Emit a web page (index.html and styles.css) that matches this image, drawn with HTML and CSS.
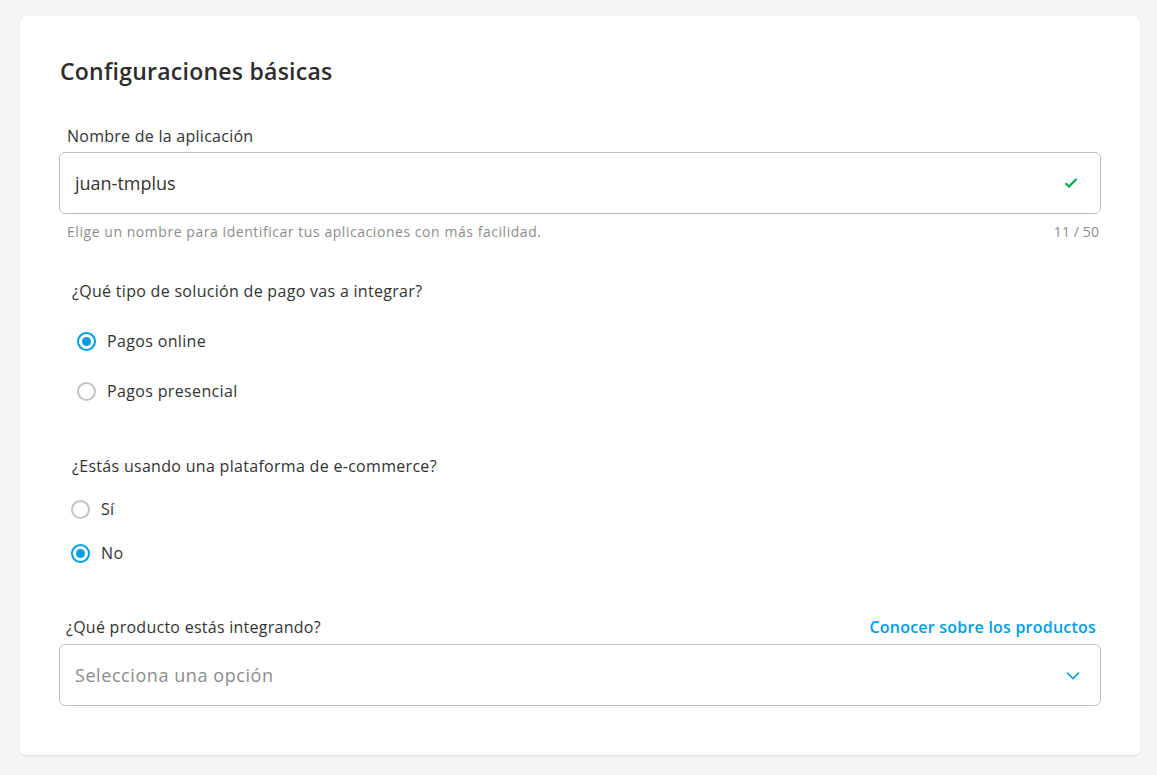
FILE: index.html
```html
<!DOCTYPE html>
<html lang="es">
<head>
<meta charset="utf-8">
<link rel="stylesheet" href="styles.css">
</head>
<body>
<main class="card">
  <h1 class="title">Configuraciones básicas</h1>

  <section class="field">
    <label class="label label-name">Nombre de la aplicación</label>
    <div class="input">
      <span class="value">juan-tmplus</span>
      <svg class="check" width="14" height="12" viewBox="0 0 14 12"><path d="M1.5 6.2 L5 9.5 L12.5 2" fill="none" stroke="#00a650" stroke-width="2.2"/></svg>
    </div>
    <div class="helper">
      <span>Elige un nombre para identificar tus aplicaciones con más facilidad.</span>
      <span class="count">11 / 50</span>
    </div>
  </section>

  <section class="group group-pay">
    <p class="question">¿Qué tipo de solución de pago vas a integrar?</p>
    <div class="radios radios-pay">
      <div class="radio-row"><span class="radio checked"></span><span>Pagos online</span></div>
      <div class="radio-row"><span class="radio"></span><span>Pagos presencial</span></div>
    </div>
  </section>

  <section class="group group-ecom">
    <p class="question">¿Estás usando una plataforma de e-commerce?</p>
    <div class="radios radios-ecom">
      <div class="radio-row"><span class="radio"></span><span>Sí</span></div>
      <div class="radio-row"><span class="radio checked"></span><span>No</span></div>
    </div>
  </section>

  <section class="field field-product">
    <div class="label-row">
      <span class="label">¿Qué producto estás integrando?</span>
      <a class="link">Conocer sobre los productos</a>
    </div>
    <div class="input select">
      <span class="placeholder">Selecciona una opción</span>
      <svg class="chev" width="14" height="9" viewBox="0 0 14 9"><path d="M1 1.5 L7 7.5 L13 1.5" fill="none" stroke="#009ee3" stroke-width="1.6"/></svg>
    </div>
  </section>
</main>
</body>
</html>
```
FILE: styles.css
```css
* { box-sizing: border-box; }
html, body { margin: 0; }
body {
  background: #f4f5f7;
  font-family: "Open Sans", "Liberation Sans", sans-serif;
  color: #333;
  padding: 16px 17px 20px 20px;
}
.card {
  background: #fff;
  border-radius: 6px;
  box-shadow: 0 1px 2px rgba(0,0,0,0.12);
  padding: 44px 39px 49px 39px;
  width: 1120px;
}
.title {
  margin: 0 0 43px 1px;
  font-size: 23px;
  font-weight: 600;
  color: #2d2d2d;
  line-height: 1;
  letter-spacing: 0.25px;
}
.label {
  font-size: 16px;
  line-height: 20px;
  color: #333;
  letter-spacing: 0.26px;
}
.label-name { display: block; padding-left: 8px; margin-bottom: 6px; }
.input {
  height: 62px;
  border: 1px solid #bfbfbf;
  border-radius: 6px;
  display: flex;
  align-items: center;
  justify-content: space-between;
  padding: 0 22px 0 15px;
}
.value { font-size: 18px; color: #333; }
.helper {
  display: flex;
  justify-content: space-between;
  font-size: 14px;
  color: #8c8c8c;
  padding: 8px 2px 0 8px;
  line-height: 20px;
  letter-spacing: 0.55px;
}
.count { letter-spacing: 0.1px; }
.group { padding-left: 13px; }
.question { margin: 0; font-size: 16px; line-height: 20px; letter-spacing: 0.3px; }
.group-pay { margin-top: 39px; }
.group-ecom { margin-top: 55px; padding-left: 13px; }
.radios { display: flex; flex-direction: column; }
.radios-pay { gap: 30px; margin-top: 30px; padding-left: 5px; }
.radios-ecom { gap: 24px; margin-top: 23px; margin-left: -1px; }
.radio-row {
  display: flex;
  align-items: center;
  gap: 11px;
  font-size: 16px;
  line-height: 20px;
  letter-spacing: 0.35px;
}
.radio {
  width: 19px; height: 19px;
  border-radius: 50%;
  border: 2px solid #c4c4c4;
  display: inline-block;
  position: relative;
  flex: none;
}
.radio.checked { border-color: #009ee3; }
.radio.checked::after {
  content: "";
  position: absolute;
  left: 50%; top: 50%;
  width: 9px; height: 9px;
  margin: -4.5px 0 0 -4.5px;
  border-radius: 50%;
  background: #009ee3;
}
.field-product { margin-top: 53px; }
.label-row {
  display: flex;
  justify-content: space-between;
  align-items: baseline;
  padding: 0 5px 0 7px;
  margin-bottom: 6px;
}
.link {
  color: #009ee3;
  font-weight: 600;
  font-size: 16px;
  letter-spacing: 0.22px;
  cursor: pointer;
}
.placeholder { font-size: 18px; color: #8c8c8c; letter-spacing: 0.57px; }
.select { padding-right: 20px; }
```
